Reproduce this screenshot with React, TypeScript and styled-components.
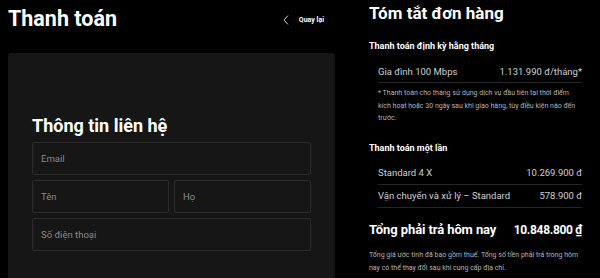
import styled, { createGlobalStyle } from "styled-components";

const Global = createGlobalStyle`
  html, body {
    margin: 0;
    background: #000;
    color: #fff;
    font-family: Roboto, "Noto Sans", sans-serif;
  }
`;

type Line = { label: string; price: string };

const MONTHLY: Line[] = [{ label: "Gia đình 100 Mbps", price: "1.131.990 đ/tháng*" }];
const ONCE: Line[] = [
  { label: "Standard 4 X", price: "10.269.900 đ" },
  { label: "Vận chuyển và xử lý – Standard", price: "578.900 đ" },
];

export default function App() {
  return (
    <>
      <Global />
      <Page>
        <Left>
          <Header>
            <Title>Thanh toán</Title>
            <Back href="#">
              <svg width="6" height="10" viewBox="0 0 6 10" fill="none">
                <polyline points="5,0.5 1,5 5,9.5" stroke="#cfcfcf" strokeWidth="1" />
              </svg>
              Quay lại
            </Back>
          </Header>
          <Card>
            <CardTitle>Thông tin liên hệ</CardTitle>
            <Fields>
              <Field placeholder="Email" $span />
              <Field placeholder="Tên" />
              <Field placeholder="Họ" />
              <Field placeholder="Số điện thoại" $span />
            </Fields>
          </Card>
        </Left>
        <Right>
          <Summary>Tóm tắt đơn hàng</Summary>
          <Section>
            <SubHead>Thanh toán định kỳ hằng tháng</SubHead>
            <Rows>
              {MONTHLY.map((l) => (
                <Row key={l.label}>
                  <span>{l.label}</span>
                  <span>{l.price}</span>
                </Row>
              ))}
            </Rows>
            <Note>
              * Thanh toán cho tháng sử dụng dịch vụ đầu tiên tại thời điểm kích hoạt hoặc 30 ngày sau khi
              giao hàng, tùy điều kiện nào đến trước.
            </Note>
          </Section>
          <Section $gap={17}>
            <SubHead>Thanh toán một lần</SubHead>
            <Rows>
              {ONCE.map((l) => (
                <Row key={l.label}>
                  <span>{l.label}</span>
                  <span>{l.price}</span>
                </Row>
              ))}
            </Rows>
          </Section>
          <Total>
            <span>Tổng phải trả hôm nay</span>
            <Amount>10.848.800 ₫</Amount>
          </Total>
          <Foot>
            Tổng giá ước tính đã bao gồm thuế. Tổng số tiền phải trả trong hôm nay có thể thay đổi sau khi
            cung cấp địa chỉ.
          </Foot>
        </Right>
      </Page>
    </>
  );
}

const Page = styled.div`
  display: flex;
  width: 600px;
  height: 278px;
  overflow: hidden;
`;
const Left = styled.div`
  width: 343px;
  padding: 0 8px;
  box-sizing: border-box;
  display: flex;
  flex-direction: column;
`;
const Header = styled.div`
  flex-shrink: 0;
  height: 53px;
  padding: 6px 11px 0 0;
  box-sizing: border-box;
  display: flex;
  justify-content: space-between;
  align-items: flex-start;
`;
const Title = styled.h1`
  margin: 0;
  font-size: 21.5px;
  line-height: 26px;
  font-weight: 700;
`;
const Back = styled.a`
  display: flex;
  align-items: center;
  gap: 10px;
  margin-top: 9px;
  color: #fff;
  text-decoration: none;
  font-size: 7px;
  font-weight: 700;
`;
const Card = styled.div`
  flex-shrink: 0;
  background: #161616;
  border-radius: 3px;
  padding: 62px 24px 30px;
  display: flex;
  flex-direction: column;
  gap: 6px;
`;
const CardTitle = styled.h2`
  margin: 0;
  font-size: 18px;
  line-height: 21px;
  font-weight: 700;
`;
const Fields = styled.div`
  display: grid;
  grid-template-columns: 1fr 1fr;
  gap: 5px;
`;
const Field = styled.input<{ $span?: boolean }>`
  grid-column: ${(p) => (p.$span ? "1 / -1" : "auto")};
  height: 33px;
  box-sizing: border-box;
  min-width: 0;
  background: #161616;
  border: 1px solid #2c2c2c;
  border-radius: 2px;
  padding: 0 8px;
  font-family: inherit;
  font-size: 9.5px;
  color: #fff;
  outline: none;
  &::placeholder {
    color: #8a8a8a;
  }
`;
const Right = styled.div`
  flex: 1;
  padding: 3px 18px 0 26px;
  display: flex;
  flex-direction: column;
`;
const Summary = styled.h2`
  margin: 0 0 17px;
  font-size: 17px;
  line-height: 20px;
  font-weight: 700;
`;
const Section = styled.div<{ $gap?: number }>`
  margin-top: ${(p) => p.$gap ?? 0}px;
  display: flex;
  flex-direction: column;
`;
const SubHead = styled.div`
  font-size: 9px;
  line-height: 12px;
  font-weight: 700;
  margin-bottom: 8px;
`;
const Rows = styled.div`
  padding-left: 9px;
  display: flex;
  flex-direction: column;
`;
const Row = styled.div`
  height: 22px;
  display: flex;
  justify-content: space-between;
  align-items: center;
  border-bottom: 1px solid #262626;
  font-size: 9.5px;
  color: #d0d0d0;
`;
const Note = styled.p`
  margin: 4px 0 0;
  padding-left: 9px;
  font-size: 7px;
  line-height: 12.5px;
  color: #b5b5b5;
`;
const Total = styled.div`
  margin-top: 14px;
  display: flex;
  justify-content: space-between;
  align-items: center;
  font-size: 13px;
  line-height: 16px;
  font-weight: 700;
  letter-spacing: -0.1px;
`;
const Amount = styled.span`
  font-size: 12px;
  letter-spacing: -0.3px;
`;
const Foot = styled.p`
  margin: 11px 0 0;
  font-size: 7px;
  line-height: 13px;
  color: #b5b5b5;
`;
